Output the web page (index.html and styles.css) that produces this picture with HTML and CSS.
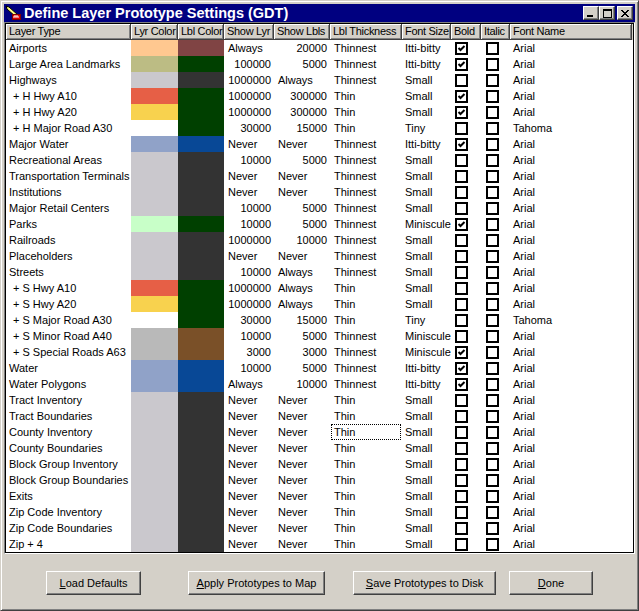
FILE: index.html
```html
<!DOCTYPE html>
<html>
<head>
<meta charset="utf-8">
<title>Define Layer Prototype Settings (GDT)</title>
<link rel="stylesheet" href="styles.css">
</head>
<body>
<div class="window">
  <div class="titlebar">
    <svg class="appicon" width="16" height="16" viewBox="0 0 16 16">
      <polygon points="1,1 4,2 13,10 11,12 2,4" fill="#ffff80" stroke="#000" stroke-width="1"/>
      <polygon points="1,1 3,1.6 1.6,3" fill="#000"/>
      <rect x="7.5" y="9.5" width="8" height="5" fill="#e00000" stroke="#800000" stroke-width="1"/>
      <path d="M9 13 V11 H11 V13 M11 11 H13 V13" stroke="#fff" stroke-width="1" fill="none"/>
    </svg>
    <span class="title">Define Layer Prototype Settings (GDT)</span>
    <div class="capbtns">
      <span class="capbtn"><svg width="8" height="7" viewBox="0 0 8 7"><rect x="0" y="5" width="6" height="2" fill="#000"/></svg></span>
      <span class="capbtn"><svg width="9" height="9" viewBox="0 0 9 9"><rect x="0.5" y="0.5" width="8" height="8" fill="none" stroke="#000"/><rect x="0" y="1" width="9" height="1" fill="#000"/></svg></span>
      <span class="capbtn close"><svg width="8" height="7" viewBox="0 0 8 7"><path d="M0 0 L7 7 M1 0 L8 7 M7 0 L0 7 M8 0 L1 7" stroke="#000" stroke-width="1" fill="none"/></svg></span>
    </div>
  </div>

  <div class="gridframe">
    <div class="grid">
      <div class="row head">
        <span class="h">Layer Type</span><span class="h">Lyr Color</span><span class="h">Lbl Color</span><span class="h">Show Lyr</span><span class="h">Show Lbls</span><span class="h">Lbl Thickness</span><span class="h">Font Size</span><span class="h">Bold</span><span class="h">Italic</span><span class="h last">Font Name</span>
      </div>

      <div class="row"><span class="c name">Airports</span><span class="sw k-peach"></span><span class="sw k-maroon"></span><span class="c l">Always</span><span class="c r">20000</span><span class="c l">Thinnest</span><span class="c fs">Itti-bitty</span><span class="c cb"><i class="box"><svg class="chk" viewBox="0 0 9 9"><polyline points="1.5,4 3.5,6 7.5,2"/></svg></i></span><span class="c cb it"><i class="box"></i></span><span class="c fn">Arial</span></div>
      <div class="row"><span class="c name">Large Area Landmarks</span><span class="sw k-khaki"></span><span class="sw k-green"></span><span class="c r">100000</span><span class="c r">5000</span><span class="c l">Thinnest</span><span class="c fs">Itti-bitty</span><span class="c cb"><i class="box"><svg class="chk" viewBox="0 0 9 9"><polyline points="1.5,4 3.5,6 7.5,2"/></svg></i></span><span class="c cb it"><i class="box"></i></span><span class="c fn">Arial</span></div>
      <div class="row"><span class="c name">Highways</span><span class="sw k-gray"></span><span class="sw k-dark"></span><span class="c r">1000000</span><span class="c l">Always</span><span class="c l">Thinnest</span><span class="c fs">Small</span><span class="c cb"><i class="box"></i></span><span class="c cb it"><i class="box"></i></span><span class="c fn">Arial</span></div>
      <div class="row"><span class="c name sub">+ H Hwy A10</span><span class="sw k-red"></span><span class="sw k-green"></span><span class="c r">1000000</span><span class="c r">300000</span><span class="c l">Thin</span><span class="c fs">Small</span><span class="c cb"><i class="box"><svg class="chk" viewBox="0 0 9 9"><polyline points="1.5,4 3.5,6 7.5,2"/></svg></i></span><span class="c cb it"><i class="box"></i></span><span class="c fn">Arial</span></div>
      <div class="row"><span class="c name sub">+ H Hwy A20</span><span class="sw k-yellow"></span><span class="sw k-green"></span><span class="c r">1000000</span><span class="c r">300000</span><span class="c l">Thin</span><span class="c fs">Small</span><span class="c cb"><i class="box"><svg class="chk" viewBox="0 0 9 9"><polyline points="1.5,4 3.5,6 7.5,2"/></svg></i></span><span class="c cb it"><i class="box"></i></span><span class="c fn">Arial</span></div>
      <div class="row"><span class="c name sub">+ H Major Road A30</span><span class="sw k-white"></span><span class="sw k-green"></span><span class="c r">30000</span><span class="c r">15000</span><span class="c l">Thin</span><span class="c fs">Tiny</span><span class="c cb"><i class="box"></i></span><span class="c cb it"><i class="box"></i></span><span class="c fn">Tahoma</span></div>
      <div class="row"><span class="c name">Major Water</span><span class="sw k-slate"></span><span class="sw k-navy"></span><span class="c l">Never</span><span class="c l">Never</span><span class="c l">Thinnest</span><span class="c fs">Itti-bitty</span><span class="c cb"><i class="box"><svg class="chk" viewBox="0 0 9 9"><polyline points="1.5,4 3.5,6 7.5,2"/></svg></i></span><span class="c cb it"><i class="box"></i></span><span class="c fn">Arial</span></div>
      <div class="row"><span class="c name">Recreational Areas</span><span class="sw k-gray"></span><span class="sw k-dark"></span><span class="c r">10000</span><span class="c r">5000</span><span class="c l">Thinnest</span><span class="c fs">Small</span><span class="c cb"><i class="box"></i></span><span class="c cb it"><i class="box"></i></span><span class="c fn">Arial</span></div>
      <div class="row"><span class="c name">Transportation Terminals</span><span class="sw k-gray"></span><span class="sw k-dark"></span><span class="c l">Never</span><span class="c l">Never</span><span class="c l">Thinnest</span><span class="c fs">Small</span><span class="c cb"><i class="box"></i></span><span class="c cb it"><i class="box"></i></span><span class="c fn">Arial</span></div>
      <div class="row"><span class="c name">Institutions</span><span class="sw k-gray"></span><span class="sw k-dark"></span><span class="c l">Never</span><span class="c l">Never</span><span class="c l">Thinnest</span><span class="c fs">Small</span><span class="c cb"><i class="box"></i></span><span class="c cb it"><i class="box"></i></span><span class="c fn">Arial</span></div>
      <div class="row"><span class="c name">Major Retail Centers</span><span class="sw k-gray"></span><span class="sw k-dark"></span><span class="c r">10000</span><span class="c r">5000</span><span class="c l">Thinnest</span><span class="c fs">Small</span><span class="c cb"><i class="box"></i></span><span class="c cb it"><i class="box"></i></span><span class="c fn">Arial</span></div>
      <div class="row"><span class="c name">Parks</span><span class="sw k-mint"></span><span class="sw k-green"></span><span class="c r">10000</span><span class="c r">5000</span><span class="c l">Thinnest</span><span class="c fs">Miniscule</span><span class="c cb"><i class="box"><svg class="chk" viewBox="0 0 9 9"><polyline points="1.5,4 3.5,6 7.5,2"/></svg></i></span><span class="c cb it"><i class="box"></i></span><span class="c fn">Arial</span></div>
      <div class="row"><span class="c name">Railroads</span><span class="sw k-gray"></span><span class="sw k-dark"></span><span class="c r">1000000</span><span class="c r">10000</span><span class="c l">Thinnest</span><span class="c fs">Small</span><span class="c cb"><i class="box"></i></span><span class="c cb it"><i class="box"></i></span><span class="c fn">Arial</span></div>
      <div class="row"><span class="c name">Placeholders</span><span class="sw k-gray"></span><span class="sw k-dark"></span><span class="c l">Never</span><span class="c l">Never</span><span class="c l">Thinnest</span><span class="c fs">Small</span><span class="c cb"><i class="box"></i></span><span class="c cb it"><i class="box"></i></span><span class="c fn">Arial</span></div>
      <div class="row"><span class="c name">Streets</span><span class="sw k-gray"></span><span class="sw k-dark"></span><span class="c r">10000</span><span class="c l">Always</span><span class="c l">Thinnest</span><span class="c fs">Small</span><span class="c cb"><i class="box"></i></span><span class="c cb it"><i class="box"></i></span><span class="c fn">Arial</span></div>
      <div class="row"><span class="c name sub">+ S Hwy A10</span><span class="sw k-red"></span><span class="sw k-green"></span><span class="c r">1000000</span><span class="c l">Always</span><span class="c l">Thin</span><span class="c fs">Small</span><span class="c cb"><i class="box"></i></span><span class="c cb it"><i class="box"></i></span><span class="c fn">Arial</span></div>
      <div class="row"><span class="c name sub">+ S Hwy A20</span><span class="sw k-yellow"></span><span class="sw k-green"></span><span class="c r">1000000</span><span class="c l">Always</span><span class="c l">Thin</span><span class="c fs">Small</span><span class="c cb"><i class="box"></i></span><span class="c cb it"><i class="box"></i></span><span class="c fn">Arial</span></div>
      <div class="row"><span class="c name sub">+ S Major Road A30</span><span class="sw k-white"></span><span class="sw k-green"></span><span class="c r">30000</span><span class="c r">15000</span><span class="c l">Thin</span><span class="c fs">Tiny</span><span class="c cb"><i class="box"></i></span><span class="c cb it"><i class="box"></i></span><span class="c fn">Tahoma</span></div>
      <div class="row"><span class="c name sub">+ S Minor Road A40</span><span class="sw k-gray2"></span><span class="sw k-brown"></span><span class="c r">10000</span><span class="c r">5000</span><span class="c l">Thinnest</span><span class="c fs">Miniscule</span><span class="c cb"><i class="box"></i></span><span class="c cb it"><i class="box"></i></span><span class="c fn">Arial</span></div>
      <div class="row"><span class="c name sub">+ S Special Roads A63</span><span class="sw k-gray2"></span><span class="sw k-brown"></span><span class="c r">3000</span><span class="c r">3000</span><span class="c l">Thinnest</span><span class="c fs">Miniscule</span><span class="c cb"><i class="box"><svg class="chk" viewBox="0 0 9 9"><polyline points="1.5,4 3.5,6 7.5,2"/></svg></i></span><span class="c cb it"><i class="box"></i></span><span class="c fn">Arial</span></div>
      <div class="row"><span class="c name">Water</span><span class="sw k-slate"></span><span class="sw k-navy"></span><span class="c r">10000</span><span class="c r">5000</span><span class="c l">Thinnest</span><span class="c fs">Itti-bitty</span><span class="c cb"><i class="box"><svg class="chk" viewBox="0 0 9 9"><polyline points="1.5,4 3.5,6 7.5,2"/></svg></i></span><span class="c cb it"><i class="box"></i></span><span class="c fn">Arial</span></div>
      <div class="row"><span class="c name">Water Polygons</span><span class="sw k-slate"></span><span class="sw k-navy"></span><span class="c l">Always</span><span class="c r">10000</span><span class="c l">Thinnest</span><span class="c fs">Itti-bitty</span><span class="c cb"><i class="box"><svg class="chk" viewBox="0 0 9 9"><polyline points="1.5,4 3.5,6 7.5,2"/></svg></i></span><span class="c cb it"><i class="box"></i></span><span class="c fn">Arial</span></div>
      <div class="row"><span class="c name">Tract Inventory</span><span class="sw k-gray"></span><span class="sw k-dark"></span><span class="c l">Never</span><span class="c l">Never</span><span class="c l">Thin</span><span class="c fs">Small</span><span class="c cb"><i class="box"></i></span><span class="c cb it"><i class="box"></i></span><span class="c fn">Arial</span></div>
      <div class="row"><span class="c name">Tract Boundaries</span><span class="sw k-gray"></span><span class="sw k-dark"></span><span class="c l">Never</span><span class="c l">Never</span><span class="c l">Thin</span><span class="c fs">Small</span><span class="c cb"><i class="box"></i></span><span class="c cb it"><i class="box"></i></span><span class="c fn">Arial</span></div>
      <div class="row"><span class="c name">County Inventory</span><span class="sw k-gray"></span><span class="sw k-dark"></span><span class="c l">Never</span><span class="c l">Never</span><span class="c l focus">Thin</span><span class="c fs">Small</span><span class="c cb"><i class="box"></i></span><span class="c cb it"><i class="box"></i></span><span class="c fn">Arial</span></div>
      <div class="row"><span class="c name">County Boundaries</span><span class="sw k-gray"></span><span class="sw k-dark"></span><span class="c l">Never</span><span class="c l">Never</span><span class="c l">Thin</span><span class="c fs">Small</span><span class="c cb"><i class="box"></i></span><span class="c cb it"><i class="box"></i></span><span class="c fn">Arial</span></div>
      <div class="row"><span class="c name">Block Group Inventory</span><span class="sw k-gray"></span><span class="sw k-dark"></span><span class="c l">Never</span><span class="c l">Never</span><span class="c l">Thin</span><span class="c fs">Small</span><span class="c cb"><i class="box"></i></span><span class="c cb it"><i class="box"></i></span><span class="c fn">Arial</span></div>
      <div class="row"><span class="c name">Block Group Boundaries</span><span class="sw k-gray"></span><span class="sw k-dark"></span><span class="c l">Never</span><span class="c l">Never</span><span class="c l">Thin</span><span class="c fs">Small</span><span class="c cb"><i class="box"></i></span><span class="c cb it"><i class="box"></i></span><span class="c fn">Arial</span></div>
      <div class="row"><span class="c name">Exits</span><span class="sw k-gray"></span><span class="sw k-dark"></span><span class="c l">Never</span><span class="c l">Never</span><span class="c l">Thin</span><span class="c fs">Small</span><span class="c cb"><i class="box"></i></span><span class="c cb it"><i class="box"></i></span><span class="c fn">Arial</span></div>
      <div class="row"><span class="c name">Zip Code Inventory</span><span class="sw k-gray"></span><span class="sw k-dark"></span><span class="c l">Never</span><span class="c l">Never</span><span class="c l">Thin</span><span class="c fs">Small</span><span class="c cb"><i class="box"></i></span><span class="c cb it"><i class="box"></i></span><span class="c fn">Arial</span></div>
      <div class="row"><span class="c name">Zip Code Boundaries</span><span class="sw k-gray"></span><span class="sw k-dark"></span><span class="c l">Never</span><span class="c l">Never</span><span class="c l">Thin</span><span class="c fs">Small</span><span class="c cb"><i class="box"></i></span><span class="c cb it"><i class="box"></i></span><span class="c fn">Arial</span></div>
      <div class="row"><span class="c name">Zip + 4</span><span class="sw k-gray"></span><span class="sw k-dark"></span><span class="c l">Never</span><span class="c l">Never</span><span class="c l">Thin</span><span class="c fs">Small</span><span class="c cb"><i class="box"></i></span><span class="c cb it"><i class="box"></i></span><span class="c fn">Arial</span></div>
    </div>
  </div>

  <div class="buttons">
    <button class="btn b-load"><u>L</u>oad Defaults</button>
    <button class="btn b-apply"><u>A</u>pply Prototypes to Map</button>
    <button class="btn b-save"><u>S</u>ave Prototypes to Disk</button>
    <button class="btn b-done"><u>D</u>one</button>
  </div>
</div>
</body>
</html>
```

FILE: styles.css
```css
* { box-sizing: border-box; }

html, body {
  margin: 0;
  padding: 0;
  background: #d4d0c8;
}

body {
  font-family: "Liberation Sans", Arial, sans-serif;
  font-size: 11px;
  color: #000;
}

.window {
  width: 639px;
  height: 611px;
  background: #d4d0c8;
  border: 1px solid;
  border-color: #d4d0c8 #404040 #404040 #d4d0c8;
  box-shadow: inset 1px 1px #ffffff, inset -1px -1px #808080;
  padding: 3px;
  display: flex;
  flex-direction: column;
}

/* Title bar */
.titlebar {
  height: 18px;
  background: #000080;
  display: flex;
  align-items: center;
  padding-left: 1px;
  padding-right: 2px;
  flex: none;
}

.appicon {
  flex: none;
  display: block;
}

.title {
  margin-left: 3px;
  color: #fff;
  font-weight: bold;
  font-size: 14.5px;
  line-height: 18px;
  white-space: nowrap;
  flex: 1;
}

.capbtns {
  display: flex;
  align-items: center;
}

.capbtn {
  width: 16px;
  height: 14px;
  background: #d4d0c8;
  border: 1px solid;
  border-color: #fff #404040 #404040 #fff;
  box-shadow: inset -1px -1px #808080;
  display: flex;
  align-items: center;
  justify-content: center;
}

.capbtn svg { display: block; }
.capbtn.close { margin-left: 2px; }

/* Grid */
.gridframe {
  border: 1px solid;
  border-color: #808080 #ffffff #ffffff #808080;
  flex: none;
}

.grid {
  border: 1px solid #000;
  background: #fff;
}

.row {
  display: grid;
  grid-template-columns: 125px 47px 46px 50px 56px 72px 49px 30px 29px 1fr;
  height: 16px;
  line-height: 16px;
}

.row.head {
  background: #d4d0c8;
}

.h {
  padding: 0 2px 0 3px;
  border-right: 1px solid #404040;
  border-bottom: 1px solid #404040;
  box-shadow: inset 1px 1px #ffffff, inset -1px -1px #808080;
  white-space: nowrap;
  overflow: hidden;
  line-height: 15px;
  letter-spacing: -0.3px;
}

.h.last { margin-right: 1px; }

.c {
  white-space: nowrap;
  overflow: hidden;
}

.name { padding-left: 3px; }
.name.sub { padding-left: 7px; }
.l { padding-left: 4px; }
.r { text-align: right; padding-right: 3px; }
.fs { padding-left: 3px; }
.fn { padding-left: 3px; }

.cb {
  padding-left: 4px;
  padding-top: 2px;
}
.cb.it { padding-left: 5px; }

.box {
  display: block;
  width: 13px;
  height: 13px;
  border: 2px solid #000;
  background: #fff;
}

.chk {
  display: block;
  width: 9px;
  height: 9px;
}

.chk polyline {
  fill: none;
  stroke: #000;
  stroke-width: 2;
}

.focus {
  outline: 1px dotted #000;
  outline-offset: -1px;
  margin-left: 1px;
  margin-right: 1px;
  padding-left: 3px;
}

.sw { display: block; }

.k-peach  { background: #ffc890; }
.k-khaki  { background: #bcbc84; }
.k-gray   { background: #cac8cd; }
.k-gray2  { background: #b9b9b9; }
.k-red    { background: #e65f46; }
.k-yellow { background: #f8d24e; }
.k-white  { background: #ffffff; }
.k-slate  { background: #90a2c8; }
.k-mint   { background: #c8ffc8; }
.k-maroon { background: #804444; }
.k-green  { background: #004000; }
.k-dark   { background: #333333; }
.k-navy   { background: #084896; }
.k-brown  { background: #7a5028; }

/* Buttons */
.buttons {
  display: flex;
  align-items: flex-start;
  padding-top: 17px;
  padding-left: 42px;
}

.btn {
  height: 24px;
  font-family: "Liberation Sans", Arial, sans-serif;
  font-size: 11px;
  color: #000;
  background: #d4d0c8;
  border: 1px solid;
  border-color: #ffffff #404040 #404040 #ffffff;
  box-shadow: inset -1px -1px #808080;
  padding: 0;
  text-align: center;
}

.btn u { text-decoration: underline; }

.b-load  { width: 95px; }
.b-apply { width: 137px; margin-left: 47px; }
.b-save  { width: 143px; margin-left: 28px; }
.b-done  { width: 84px; margin-left: 13px; }
```
